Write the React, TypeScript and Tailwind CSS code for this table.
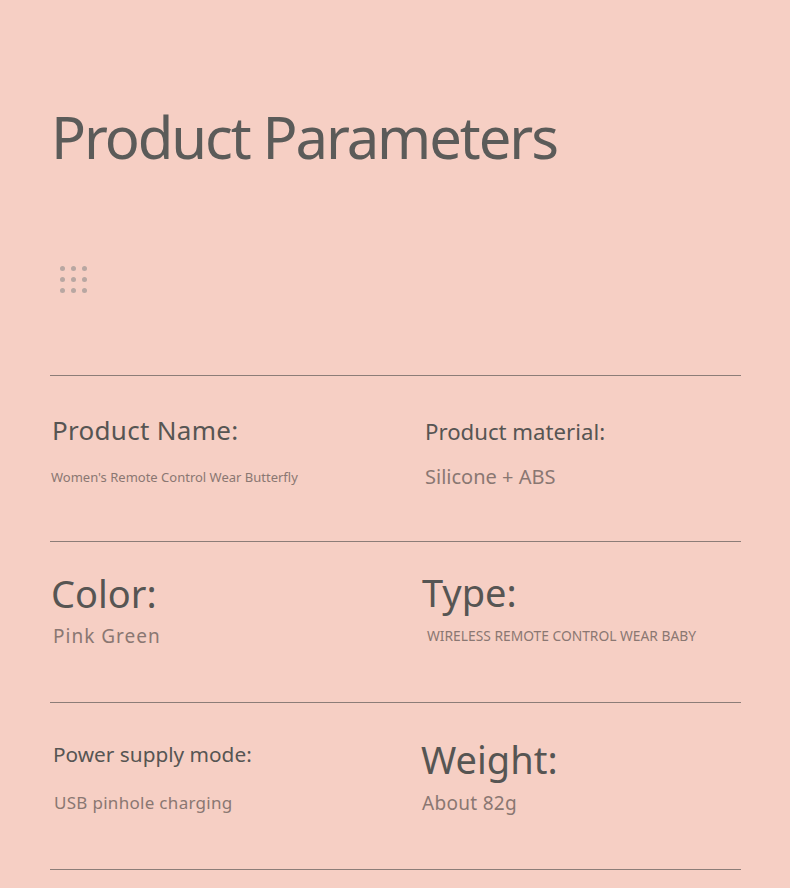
const font = { fontFamily: '"Noto Sans", "Open Sans", sans-serif' };

const rows = [
  [
    { label: 'Product Name:', labelCls: 'text-[26px] ml-[2px] mt-[38px] tracking-[0.3px]', value: "Women's Remote Control Wear Butterfly", valueCls: 'text-[13px] mt-[23px] ml-[1px]' },
    { label: 'Product material:', labelCls: 'text-[22.2px] ml-[3px] mt-[42px]', value: 'Silicone + ABS', valueCls: 'text-[20px] mt-[19px] ml-[3px]' },
  ],
  [
    { label: 'Color:', labelCls: 'text-[38px] ml-[1px] mt-[28px] leading-[1.2]', value: 'Pink Green', valueCls: 'text-[19px] mt-[7px] ml-[3px] tracking-[1px]' },
    { label: 'Type:', labelCls: 'text-[38px] mt-[27px] leading-[1.2]', value: 'WIRELESS REMOTE CONTROL WEAR BABY', valueCls: 'text-[13.8px] mt-[11px] ml-[5px]' },
  ],
  [
    { label: 'Power supply mode:', labelCls: 'text-[20.8px] ml-[3px] mt-[38px]', value: 'USB pinhole charging', valueCls: 'text-[17px] mt-[25px] ml-[4px] tracking-[0.3px]' },
    { label: 'Weight:', labelCls: 'text-[38px] -ml-[1px] mt-[33px] leading-[1.2]', value: 'About 82g', valueCls: 'text-[19px] mt-[8px] tracking-[0.3px]' },
  ],
];

const heights = ['h-[166px]', 'h-[161px]', 'h-[167px]'];

export default function App() {
  return (
    <div className="w-[790px] h-[888px] bg-[#f6cfc4] overflow-hidden" style={font}>
      <div className="pl-[50px]">
        {/* Title */}
        <h1 className="pt-[102px] text-[58px] leading-[1.2] text-[#5b5b59] tracking-[-2.1px] ml-[1px]">
          Product Parameters
        </h1>

        {/* dot grid */}
        <div className="mt-[94px] ml-[10px] grid grid-cols-3 gap-x-[6px] gap-y-[6px] w-fit">
          {Array.from({ length: 9 }).map((_, i) => (
            <span key={i} className="w-[5px] h-[5px] rounded-full bg-[#b8a7a2]" />
          ))}
        </div>

        {/* parameter table */}
        <div className="mt-[82px] w-[691px] border-t border-[#8c7d78]">
          {rows.map((row, r) => (
            <div key={r} className={`grid grid-cols-[372px_1fr] border-b border-[#8c7d78] ${heights[r]}`}>
              {row.map(cell => (
                <div key={cell.label} className="flex flex-col items-start">
                  <p className={`text-[#565553] leading-[1.25] ${cell.labelCls}`}>{cell.label}</p>
                  <p className={`text-[#8a7772] leading-[1.3] ${cell.valueCls}`}>{cell.value}</p>
                </div>
              ))}
            </div>
          ))}
        </div>
      </div>
    </div>
  );
}
